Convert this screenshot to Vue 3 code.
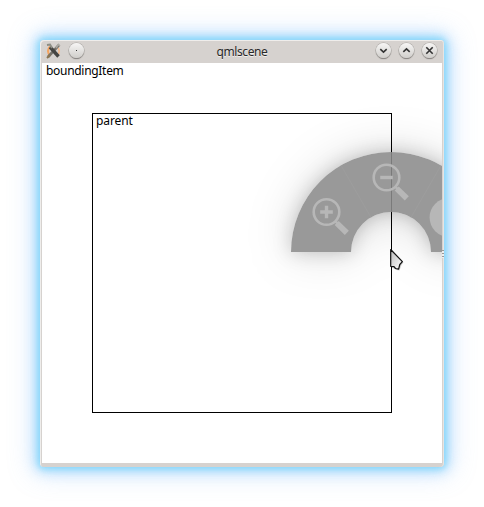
<script setup>
const controls = [
  { name: 'minimize', path: 'M5.3 7.2 L8.5 10.2 L11.7 7.2' },
  { name: 'maximize', path: 'M5.3 9.8 L8.5 6.8 L11.7 9.8' },
  { name: 'close', path: 'M5.3 5.3 L11.7 11.7 M11.7 5.3 L5.3 11.7' },
]
</script>

<template>
  <main class="desktop">
    <section class="window">
      <header class="titlebar">
        <div class="side">
          <svg class="app-icon" width="16" height="16" viewBox="0 0 16 16">
            <path d="M4 3.5Q0 8 4 12.5" fill="none" stroke="#f5a45f" stroke-width="2" />
            <path d="M11.5 4Q14.5 8 12 11.5" fill="none" stroke="#f5bd91" stroke-width="1.6" />
            <path d="M2 14 L13 2" stroke="#74716a" stroke-width="2.6" />
            <path d="M4 4 L12.5 13.5" stroke="#454543" stroke-width="3.4" />
            <path d="M1 2 L4 1.6 L6 5" fill="none" stroke="#8d8e85" stroke-width="2" />
            <path d="M10 5 L12.5 1.5 L14 3" fill="none" stroke="#aaa9a3" stroke-width="1.5" />
            <path d="M1 15 L4 12" stroke="#8b7551" stroke-width="2" />
          </svg>
          <span class="btn"><i class="dot"></i></span>
        </div>
        <h1 class="title">qmlscene</h1>
        <div class="side right">
          <span v-for="c in controls" :key="c.name" class="btn">
            <svg width="17" height="17" viewBox="0 0 17 17">
              <path :d="c.path" fill="none" stroke="#333" stroke-width="1.6" />
            </svg>
          </span>
        </div>
      </header>
      <div class="bounding">
        <span class="label">boundingItem</span>
        <div class="parent"><span class="label inner">parent</span></div>
        <svg class="pie" width="400" height="400" viewBox="42 63 400 400">
          <defs>
            <filter id="wide" filterUnits="userSpaceOnUse" x="180" y="40" width="420" height="400">
              <feGaussianBlur stdDeviation="24" />
            </filter>
            <filter id="near" filterUnits="userSpaceOnUse" x="220" y="90" width="340" height="240">
              <feGaussianBlur stdDeviation="9" />
            </filter>
            <linearGradient id="ptr" x1="0" y1="0" x2="1" y2="1">
              <stop offset="0" stop-color="#bbb" />
              <stop offset="1" stop-color="#fff" />
            </linearGradient>
            <mask id="outside" maskUnits="userSpaceOnUse" x="42" y="63" width="400" height="400">
              <rect x="42" y="63" width="400" height="400" fill="#fff" />
              <path d="M291 252A100 100 0 0 1 491 252H431A40 40 0 0 0 351 252Z" fill="#000" />
            </mask>
          </defs>
          <g mask="url(#outside)">
            <g filter="url(#wide)">
              <path class="ring" d="M291 252A100 100 0 0 1 491 252H431A40 40 0 0 0 351 252Z" opacity=".15" />
            </g>
            <g filter="url(#near)">
              <path class="ring" d="M291 252A100 100 0 0 1 491 252H431A40 40 0 0 0 351 252Z" opacity=".2" />
            </g>
          </g>
          <path d="M291 252A100 100 0 0 1 491 252H431A40 40 0 0 0 351 252Z" fill="#8b8b8b" fill-opacity=".88" />
          <path d="M341 165.4L371 217.4M441 165.4L411 217.4" stroke="#a0a0a0" stroke-width=".6" />
          <g v-for="(p, i) in [[326.5, 212], [386.5, 177.5]]" :key="i" :transform="`translate(${p[0]} ${p[1]})`" fill="none" stroke="#b7b7b7">
            <circle r="12.8" stroke-width="2.6" />
            <path d="M8.8 9.2L11.5 12" stroke-width="2.5" />
            <path d="M10.2 11L20.3 20.8" stroke-width="5.8" />
            <path :d="i ? 'M-6.3 0H6.3' : 'M-6.3 0H6.3M0-6.3V6.3'" stroke-width="3.4" />
          </g>
          <circle cx="449" cy="217.5" r="19.4" fill="#b7b7b7" />
          <path d="M391 249.5L402.5 261.5L400.5 264L398.5 269.5L395.5 269L391 266.5Z" transform="translate(1 1)" fill="#000" opacity=".18" />
          <path d="M390.7 249.5L402.4 261.7L399.8 264.5L398.6 269.2L395.5 268.5L394 266.7L390.7 266.3Z" fill="url(#ptr)" stroke="#111" stroke-width="1.2" stroke-linejoin="round" />
        </svg>
      </div>
      <i class="grip"></i>
    </section>
  </main>
</template>

<style>
body { background: #fff; }
</style>

<style scoped>
.desktop {
  box-sizing: border-box;
  width: 484px;
  height: 507px;
  padding: 40px;
  overflow: hidden;
  font-family: "Noto Sans", "Open Sans", sans-serif;
}
.window {
  position: relative;
  box-sizing: border-box;
  width: 404px;
  height: 427px;
  padding: 0 2px 4px;
  border-radius: 4px;
  background: #d6d2cf;
  box-shadow:
    inset 1px 1px 0 #efedeb,
    inset -1px 0 0 #e7e4e1,
    0 0 6px 2px rgba(100, 208, 250, .6),
    0 0 13px 4px rgba(105, 200, 250, .45),
    0 0 26px 6px rgba(120, 175, 250, .34);
}
.titlebar {
  display: grid;
  grid-template-columns: 1fr auto 1fr;
  height: 23px;
  align-items: center;
}
.side { display: flex; align-items: center; gap: 7px; padding: 0 4px; }
.right { justify-content: flex-end; gap: 8px; padding-right: 5px; }
.app-icon { display: block; margin-top: -2px; }
.btn {
  display: flex;
  align-items: center;
  justify-content: center;
  width: 15px;
  height: 15px;
  flex: none;
  border-radius: 50%;
  background: linear-gradient(#f7f6f5, #d0cecb);
  box-shadow: 0 0 0 .6px #aaa7a4, 0 1px 1px #65615e;
  margin-top: -2px;
}
.btn svg { flex: none; display: block; }
.dot { width: 1px; height: 1px; background: #333; }
.title {
  margin: 0;
  font-size: 12px;
  font-weight: 400;
  line-height: 21px;
  letter-spacing: -.42px;
  color: #292929;
  text-shadow: 0 1px 0 #f1efed;
}
.bounding {
  position: relative;
  box-sizing: border-box;
  height: 400px;
  padding: 0 50px 50px;
  overflow: hidden;
  background: #fff;
}
.label {
  display: block;
  height: 50px;
  margin-left: -46px;
  font-size: 12px;
  line-height: 16px;
  letter-spacing: -.3px;
  color: #000;
}
.inner { height: auto; margin-left: 3px; line-height: 14px; letter-spacing: -.1px; }
.parent {
  box-sizing: border-box;
  width: 300px;
  height: 300px;
  border: 1px solid #000;
}
.pie { position: absolute; top: 0; left: 0; }
.ring { fill: #000; }
.grip {
  position: absolute;
  right: 0;
  top: 210px;
  width: 2px;
  height: 8px;
  background: repeating-linear-gradient(#999 0 1px, #eee 1px 3px);
}
</style>
